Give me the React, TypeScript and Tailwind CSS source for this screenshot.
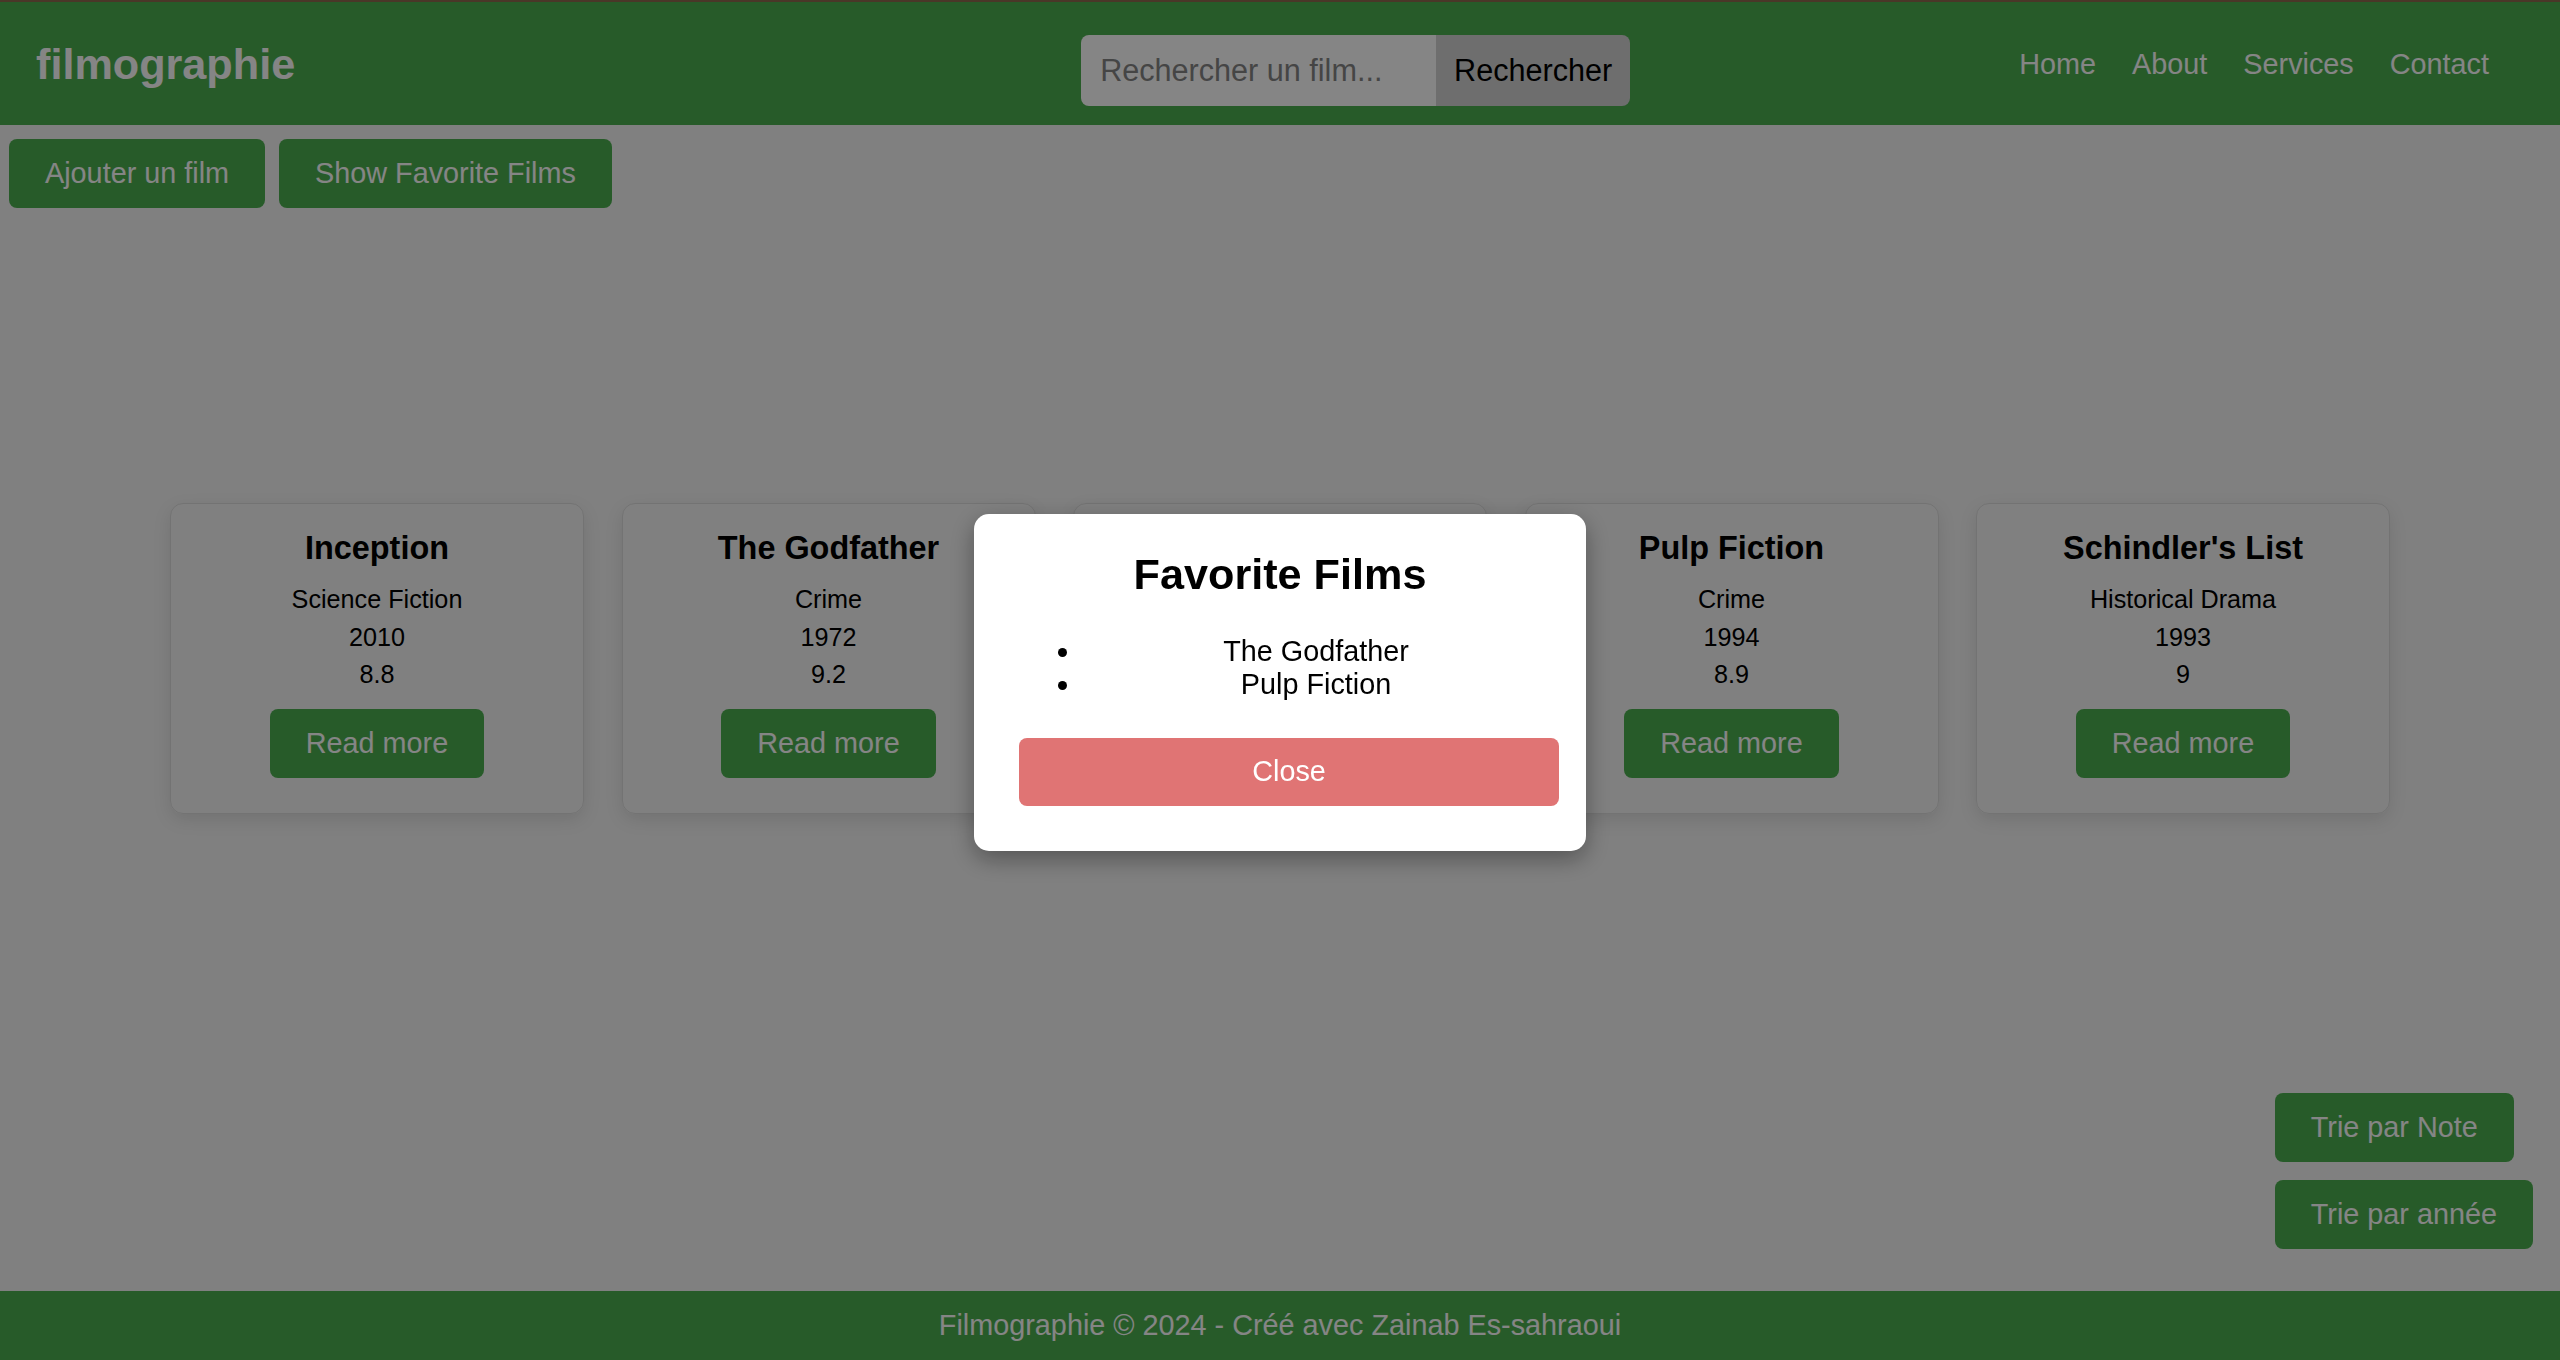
const films = [
  { title: "Inception", genre: "Science Fiction", year: 2010, note: "8.8" },
  { title: "The Godfather", genre: "Crime", year: 1972, note: "9.2" },
  { title: "The Dark Knight", genre: "Action", year: 2008, note: "9" },
  { title: "Pulp Fiction", genre: "Crime", year: 1994, note: "8.9" },
  { title: "Schindler's List", genre: "Historical Drama", year: 1993, note: "9" },
];

const favorites = ["The Godfather", "Pulp Fiction"];

const greenBtn =
  "h-[69px] rounded-[8px] bg-[#4caf50] px-[36px] text-[28.8px] leading-[33px] text-white";

function FilmCard({ title, genre, year, note }: (typeof films)[number]) {
  return (
    <div className="flex w-[414px] flex-col items-center rounded-[13px] border border-[#dcdcdc] pt-[26px] pb-[35px] text-center text-black shadow-[0_6px_18px_rgba(0,0,0,0.1)]">
      <h3 className="text-[32.4px] leading-[37px] font-bold">{title}</h3>
      <div className="mt-[14px] text-[25.2px] leading-[37.6px]">
        <p>{genre}</p>
        <p>{year}</p>
        <p>{note}</p>
      </div>
      <button className={`mt-[15px] ${greenBtn}`}>Read more</button>
    </div>
  );
}

export default function App() {
  return (
    <div
      className="relative flex h-screen flex-col bg-[#f5f5f5]"
      style={{ fontFamily: '"Liberation Sans", Arial, sans-serif' }}
    >
      <header className="flex h-[125px] shrink-0 items-center border-t-2 border-[#8e6a4e] bg-[#4caf50] pt-[3px] pr-[71px] pl-[36px] text-white">
        <p className="text-[43.2px] leading-none font-bold">filmographie</p>
        <div className="mt-[11px] ml-[786px] flex h-[71px] overflow-hidden rounded-[8px]">
          <input
            className="h-full w-[355px] bg-white px-[19px] text-[30.6px] text-black outline-none placeholder:text-[#858585]"
            placeholder="Rechercher un film..."
          />
          <button className="h-full w-[194px] bg-[#d3d3d3] text-[30.6px] text-black">
            Rechercher
          </button>
        </div>
        <nav className="ml-auto flex gap-[36px] text-[28.8px]">
          <a>Home</a>
          <a>About</a>
          <a>Services</a>
          <a>Contact</a>
        </nav>
      </header>

      <main className="flex flex-1 flex-col">
        <div className="mt-[14px] ml-[9px] flex gap-[14px]">
          <button className={greenBtn}>Ajouter un film</button>
          <button className={greenBtn}>Show Favorite Films</button>
        </div>

        <div className="mt-[295px] flex justify-center gap-[37.5px]">
          {films.map((f) => (
            <FilmCard key={f.title} {...f} />
          ))}
        </div>

        <div className="mt-auto mr-[27px] mb-[42px] flex flex-col items-start gap-[18px] self-end">
          <button className={greenBtn}>Trie par Note</button>
          <button className={greenBtn}>Trie par année</button>
        </div>
      </main>

      <footer className="flex h-[69px] shrink-0 items-center justify-center bg-[#4caf50] text-[28.8px] text-white">
        Filmographie © 2024 - Créé avec Zainab Es-sahraoui
      </footer>

      {/* favorites modal */}
      <div className="fixed inset-0 flex items-center justify-center bg-black/[0.48] pt-[4px]">
        <div className="w-[612px] rounded-[15px] bg-white px-[36px] pt-[35px] pb-[36px] text-black shadow-[0_8px_24px_rgba(0,0,0,0.35)]">
          <h2 className="mb-[36px] text-center text-[43.2px] leading-[50px] font-bold">
            Favorite Films
          </h2>
          <ul className="mb-[28px] list-disc pl-[72px] text-center text-[28.8px] leading-[33px]">
            {favorites.map((f) => (
              <li key={f}>{f}</li>
            ))}
          </ul>
          <button className="m-[9px] h-[68px] w-[540px] rounded-[8px] bg-[#e07474] text-[28.8px] text-white">
            Close
          </button>
        </div>
      </div>
    </div>
  );
}
